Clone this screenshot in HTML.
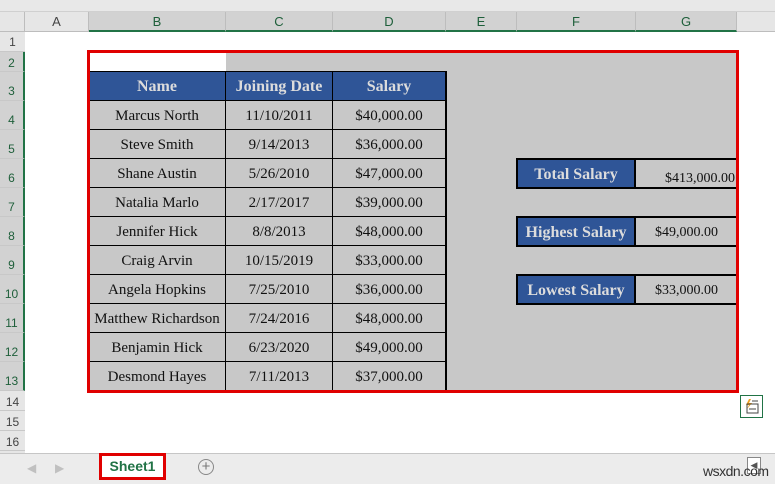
<!DOCTYPE html>
<html><head><style>
*{margin:0;padding:0;box-sizing:border-box}
body{width:775px;height:484px;position:relative;overflow:hidden;background:#fff;font-family:"Liberation Sans",sans-serif}
.a{position:absolute}
.ch{position:absolute;top:12px;height:20px;border-right:1px solid #bdbdbd;font-size:13px;color:#444;text-align:center;line-height:19px}
.rh{position:absolute;left:0;width:25px;border-bottom:1px solid #c8c8c8;font-size:12px;color:#444;text-align:center;background:#e6e6e6}
.c{position:absolute;font-family:"Liberation Serif",serif;font-size:15px;color:#111;text-align:center;border-right:1px solid #000;border-bottom:1px solid #000;display:flex;align-items:center;justify-content:center;padding-top:3px}
.h{background:#2f5597;color:#dcdcdc;font-weight:bold;font-size:16px;padding-top:2px}
</style></head><body>
<div class="a" style="left:0;top:0;width:775px;height:12px;background:#e8e8e8;border-bottom:1px solid #d0d0d0"></div>
<div class="a" style="left:0;top:12px;width:775px;height:20px;background:#e6e6e6;border-bottom:1px solid #bdbdbd"></div>
<div class="ch" style="left:0;width:25px"></div>
<div class="ch" style="left:25px;width:64px">A</div>
<div class="ch" style="left:89px;width:137px;background:#d2d2d2;border-bottom:2px solid #217346;color:#1e5f3a">B</div>
<div class="ch" style="left:226px;width:107px;background:#d2d2d2;border-bottom:2px solid #217346;color:#1e5f3a">C</div>
<div class="ch" style="left:333px;width:113px;background:#d2d2d2;border-bottom:2px solid #217346;color:#1e5f3a">D</div>
<div class="ch" style="left:446px;width:71px;background:#d2d2d2;border-bottom:2px solid #217346;color:#1e5f3a">E</div>
<div class="ch" style="left:517px;width:119px;background:#d2d2d2;border-bottom:2px solid #217346;color:#1e5f3a">F</div>
<div class="ch" style="left:636px;width:101px;background:#d2d2d2;border-bottom:2px solid #217346;color:#1e5f3a">G</div>

<div class="rh" style="top:32px;height:20px;line-height:20px">1</div>
<div class="rh" style="top:52px;height:20px;line-height:22px;background:#d2d2d2;border-right:2px solid #217346;color:#1e5f3a">2</div>
<div class="rh" style="top:72px;height:29px;line-height:38px;background:#d2d2d2;border-right:2px solid #217346;color:#1e5f3a">3</div>
<div class="rh" style="top:101px;height:29px;line-height:38px;background:#d2d2d2;border-right:2px solid #217346;color:#1e5f3a">4</div>
<div class="rh" style="top:130px;height:29px;line-height:38px;background:#d2d2d2;border-right:2px solid #217346;color:#1e5f3a">5</div>
<div class="rh" style="top:159px;height:29px;line-height:38px;background:#d2d2d2;border-right:2px solid #217346;color:#1e5f3a">6</div>
<div class="rh" style="top:188px;height:29px;line-height:38px;background:#d2d2d2;border-right:2px solid #217346;color:#1e5f3a">7</div>
<div class="rh" style="top:217px;height:29px;line-height:38px;background:#d2d2d2;border-right:2px solid #217346;color:#1e5f3a">8</div>
<div class="rh" style="top:246px;height:29px;line-height:38px;background:#d2d2d2;border-right:2px solid #217346;color:#1e5f3a">9</div>
<div class="rh" style="top:275px;height:29px;line-height:38px;background:#d2d2d2;border-right:2px solid #217346;color:#1e5f3a">10</div>
<div class="rh" style="top:304px;height:29px;line-height:38px;background:#d2d2d2;border-right:2px solid #217346;color:#1e5f3a">11</div>
<div class="rh" style="top:333px;height:29px;line-height:38px;background:#d2d2d2;border-right:2px solid #217346;color:#1e5f3a">12</div>
<div class="rh" style="top:362px;height:29px;line-height:38px;background:#d2d2d2;border-right:2px solid #217346;color:#1e5f3a">13</div>
<div class="rh" style="top:391px;height:20px;line-height:22px">14</div>
<div class="rh" style="top:411px;height:20px;line-height:22px">15</div>
<div class="rh" style="top:431px;height:20px;line-height:22px">16</div>
<div class="a" style="left:0;top:451px;width:25px;height:3px;background:#e6e6e6"></div>

<div class="a" style="left:89px;top:52px;width:648px;height:339px;background:#c8c8c8"></div>
<div class="a" style="left:89px;top:52px;width:137px;height:20px;background:#fff"></div>

<div class="a" style="left:89px;top:71px;width:358px;height:320px;border-top:2px solid #000;border-right:2px solid #000"></div>

<div class="c h" style="left:89px;top:72px;width:137px;height:29px">Name</div>
<div class="c h" style="left:226px;top:72px;width:107px;height:29px">Joining Date</div>
<div class="c h" style="left:333px;top:72px;width:113px;height:29px">Salary</div>

<div class="c" style="left:89px;top:101px;width:137px;height:29px">Marcus North</div><div class="c" style="left:226px;top:101px;width:107px;height:29px">11/10/2011</div><div class="c" style="left:333px;top:101px;width:113px;height:29px">$40,000.00</div>
<div class="c" style="left:89px;top:130px;width:137px;height:29px">Steve Smith</div><div class="c" style="left:226px;top:130px;width:107px;height:29px">9/14/2013</div><div class="c" style="left:333px;top:130px;width:113px;height:29px">$36,000.00</div>
<div class="c" style="left:89px;top:159px;width:137px;height:29px">Shane Austin</div><div class="c" style="left:226px;top:159px;width:107px;height:29px">5/26/2010</div><div class="c" style="left:333px;top:159px;width:113px;height:29px">$47,000.00</div>
<div class="c" style="left:89px;top:188px;width:137px;height:29px">Natalia Marlo</div><div class="c" style="left:226px;top:188px;width:107px;height:29px">2/17/2017</div><div class="c" style="left:333px;top:188px;width:113px;height:29px">$39,000.00</div>
<div class="c" style="left:89px;top:217px;width:137px;height:29px">Jennifer Hick</div><div class="c" style="left:226px;top:217px;width:107px;height:29px">8/8/2013</div><div class="c" style="left:333px;top:217px;width:113px;height:29px">$48,000.00</div>
<div class="c" style="left:89px;top:246px;width:137px;height:29px">Craig Arvin</div><div class="c" style="left:226px;top:246px;width:107px;height:29px">10/15/2019</div><div class="c" style="left:333px;top:246px;width:113px;height:29px">$33,000.00</div>
<div class="c" style="left:89px;top:275px;width:137px;height:29px">Angela Hopkins</div><div class="c" style="left:226px;top:275px;width:107px;height:29px">7/25/2010</div><div class="c" style="left:333px;top:275px;width:113px;height:29px">$36,000.00</div>
<div class="c" style="left:89px;top:304px;width:137px;height:29px">Matthew Richardson</div><div class="c" style="left:226px;top:304px;width:107px;height:29px">7/24/2016</div><div class="c" style="left:333px;top:304px;width:113px;height:29px">$48,000.00</div>
<div class="c" style="left:89px;top:333px;width:137px;height:29px">Benjamin Hick</div><div class="c" style="left:226px;top:333px;width:107px;height:29px">6/23/2020</div><div class="c" style="left:333px;top:333px;width:113px;height:29px">$49,000.00</div>
<div class="c" style="left:89px;top:362px;width:137px;height:29px">Desmond Hayes</div><div class="c" style="left:226px;top:362px;width:107px;height:29px">7/11/2013</div><div class="c" style="left:333px;top:362px;width:113px;height:29px">$37,000.00</div>

<div class="a" style="left:516px;top:158px;width:222px;height:31px;border:2px solid #000"></div>
<div class="c h" style="left:518px;top:160px;width:118px;height:27px;border-bottom:none;border-right:2px solid #000">Total Salary</div>
<div class="c" style="left:636px;top:160px;width:101px;height:27px;border:none;font-size:14px;justify-content:flex-end;padding-top:10px;padding-right:2px">$413,000.00</div>

<div class="a" style="left:516px;top:216px;width:222px;height:31px;border:2px solid #000"></div>
<div class="c h" style="left:518px;top:218px;width:118px;height:27px;border-bottom:none;border-right:2px solid #000">Highest Salary</div>
<div class="c" style="left:636px;top:218px;width:101px;height:27px;border:none;font-size:14px">$49,000.00</div>

<div class="a" style="left:516px;top:274px;width:222px;height:31px;border:2px solid #000"></div>
<div class="c h" style="left:518px;top:276px;width:118px;height:27px;border-bottom:none;border-right:2px solid #000">Lowest Salary</div>
<div class="c" style="left:636px;top:276px;width:101px;height:27px;border:none;font-size:14px">$33,000.00</div>

<div class="a" style="left:87px;top:50px;width:652px;height:343px;border:3px solid #e00000"></div>

<div class="a" style="left:740px;top:395px;width:23px;height:23px;border:1px solid #217346;background:#fff">
<svg width="21" height="21" viewBox="0 0 21 21"><path d="M8 3 L5 9 H8 L6 13 L11 7 H8 L10 3Z" fill="#f0a020"/><rect x="6" y="8" width="11" height="9" fill="none" stroke="#444"/><line x1="8" y1="13" x2="15" y2="13" stroke="#444"/><line x1="11" y1="5" x2="17" y2="5" stroke="#444"/></svg></div>

<div class="a" style="left:0;top:453px;width:775px;height:31px;background:#ececec;border-top:1px solid #c6c6c6"></div>
<div class="a" style="left:27px;top:461px;font-size:12px;color:#c0c0c0">&#9664;</div>
<div class="a" style="left:55px;top:461px;font-size:12px;color:#c0c0c0">&#9654;</div>
<div class="a" style="left:99px;top:453px;width:67px;height:27px;background:#fff;border:3px solid #e00000;color:#217346;font-weight:bold;font-size:14px;text-align:center;line-height:21px">Sheet1</div>
<div class="a" style="left:198px;top:459px;width:16px;height:16px;border:1.5px solid #888;border-radius:50%;text-align:center;line-height:13px;color:#777;font-size:15px">+</div>
<div class="a" style="left:747px;top:457px;width:14px;height:17px;border:1px solid #888;background:#fff;font-size:9px;line-height:15px;text-align:center;color:#555">&#9664;</div>
<div class="a" style="left:703px;top:463px;font-size:14px;color:#333;letter-spacing:-0.5px">wsxdn.com</div>
</body></html>
